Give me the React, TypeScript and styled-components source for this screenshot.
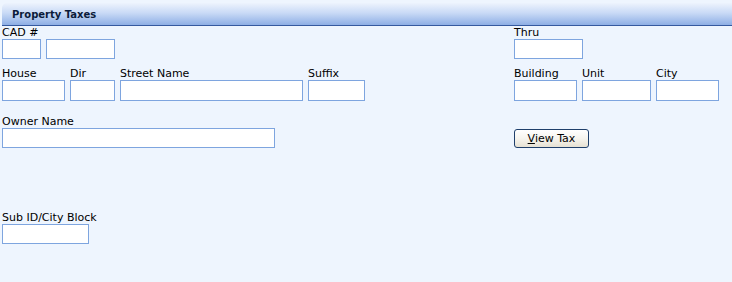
import React from 'react';
import styled, { createGlobalStyle } from 'styled-components';

const GlobalStyle = createGlobalStyle`
  html, body {
    margin: 0;
    padding: 0;
    background: #eef5fe;
  }
  body {
    font-family: "DejaVu Sans", Verdana, sans-serif;
    font-size: 11px;
    color: #000;
  }
`;

const Page = styled.div`
  width: 732px;
  height: 282px;
  background: #eef5fe;
  overflow: hidden;
`;

const Header = styled.div`
  margin: 3px 0 0 2px;
  height: 22px;
  display: flex;
  align-items: center;
  padding-left: 10px;
  border-radius: 5px 0 0 0;
  background: linear-gradient(to bottom, #edf3fd 0%, #c9daf6 45%, #8eafe5 100%);
  border-bottom: 1px solid #35599f;
  font-weight: bold;
  font-size: 10px;
  color: #0b1b3a;
`;

const Form = styled.div`
  display: grid;
  grid-template-columns: 512px 1fr;
  padding-left: 2px;
`;

const Row = styled.div<{ $top: number }>`
  display: flex;
  gap: 5px;
  margin-top: ${({ $top }) => $top}px;
  align-items: flex-end;
`;

const Field = styled.div`
  display: flex;
  flex-direction: column;
`;

const Label = styled.label`
  height: 12px;
  line-height: 12px;
  font-size: 11px;
  white-space: nowrap;
`;

const Input = styled.input<{ $w: number; $h?: number }>`
  box-sizing: border-box;
  width: ${({ $w }) => $w}px;
  height: ${({ $h }) => $h ?? 20}px;
  margin: 0;
  padding: 0 2px;
  border: 1px solid #7ea5df;
  background: #fff;
  font-family: inherit;
  font-size: 11px;
  outline: none;
`;

const Button = styled.button`
  box-sizing: border-box;
  width: 75px;
  height: 19px;
  padding: 0;
  border: 1px solid #1f3f6b;
  border-radius: 3px;
  background: linear-gradient(to bottom, #ffffff 0%, #f6f4ee 50%, #e6e1d3 100%);
  font-family: inherit;
  font-size: 11px;
  color: #000;
  cursor: pointer;

  u {
    text-decoration: underline;
  }
`;

export default function App() {
  return (
    <Page>
      <GlobalStyle />
      <Header>Property Taxes</Header>
      <Form>
        <Row $top={1}>
          <Field>
            <Label>CAD #</Label>
            <Input $w={39} />
          </Field>
          <Input $w={69} />
        </Row>
        <Row $top={1}>
          <Field>
            <Label>Thru</Label>
            <Input $w={69} />
          </Field>
        </Row>

        <Row $top={9}>
          <Field>
            <Label>House</Label>
            <Input $w={63} $h={21} />
          </Field>
          <Field>
            <Label>Dir</Label>
            <Input $w={45} $h={21} />
          </Field>
          <Field>
            <Label>Street Name</Label>
            <Input $w={183} $h={21} />
          </Field>
          <Field>
            <Label>Suffix</Label>
            <Input $w={57} $h={21} />
          </Field>
        </Row>
        <Row $top={9}>
          <Field>
            <Label>Building</Label>
            <Input $w={63} $h={21} />
          </Field>
          <Field>
            <Label>Unit</Label>
            <Input $w={69} $h={21} />
          </Field>
          <Field>
            <Label>City</Label>
            <Input $w={63} $h={21} />
          </Field>
        </Row>

        <Row $top={15}>
          <Field>
            <Label>Owner Name</Label>
            <Input $w={273} />
          </Field>
        </Row>
        <Row $top={14}>
          <Button>
            <u>V</u>iew Tax
          </Button>
        </Row>

        <Row $top={64}>
          <Field>
            <Label>Sub ID/City Block</Label>
            <Input $w={87} />
          </Field>
        </Row>
      </Form>
    </Page>
  );
}
